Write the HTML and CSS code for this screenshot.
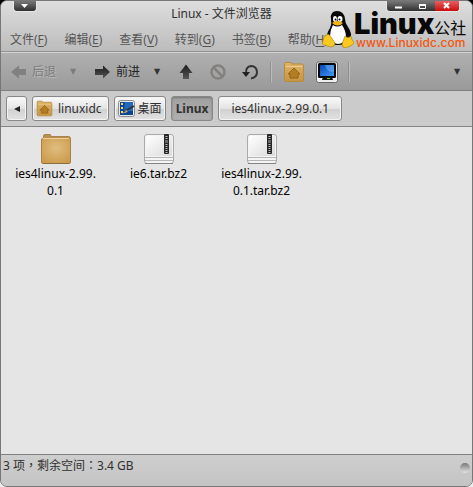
FILE: index.html
```html
<!DOCTYPE html>
<html lang="zh-CN">
<head>
<meta charset="utf-8">
<meta name="viewport" content="width=device-width, initial-scale=1">
<title>Linux - 文件浏览器</title>
<link rel="stylesheet" href="styles.css">
</head>
<body>
<svg class="defs" aria-hidden="true">
  <defs>
    <linearGradient id="dark" x1="0" y1="0" x2="0" y2="1"><stop offset="0" stop-color="#1c1c1c"/><stop offset="1" stop-color="#555"/></linearGradient>
    <linearGradient id="tan" x1="0" y1="0" x2="0" y2="1"><stop offset="0" stop-color="#dfb467"/><stop offset="1" stop-color="#c59443"/></linearGradient>
    <radialGradient id="folder" cx=".5" cy=".4" r=".7"><stop offset="0" stop-color="#dfbd80"/><stop offset="1" stop-color="#cc9a48"/></radialGradient>
    <linearGradient id="paper" x1="0" y1="0" x2="1" y2="1"><stop offset="0" stop-color="#fff"/><stop offset="1" stop-color="#dadada"/></linearGradient>
    <linearGradient id="screen" x1="0" y1="0" x2="1" y2="1"><stop offset="0" stop-color="#0b46b8"/><stop offset="1" stop-color="#3f9bf5"/></linearGradient>
    <symbol id="archive" viewBox="0 0 32 32">
      <rect x="1.500" y="1.500" width="29" height="29" rx="2.500" fill="#f4f4f4" stroke="#aaa"/>
      <rect x="3" y="3" width="26" height="20" rx="1" fill="url(#paper)"/>
      <path d="M2 24.500h28M2 27.500h28" stroke="#b5b5b5"/>
      <path d="M2 30.500h28" stroke="#858585"/>
      <rect x="21" y="1" width="5" height="20" rx="1" fill="#262626"/>
      <path d="M23.500 3v3M23.500 11v9" stroke="#bbb" stroke-width="2" stroke-dasharray="1 1"/>
      <rect x="22" y="7" width="3" height="3" fill="#666"/>
    </symbol>
    <symbol id="home" viewBox="0 0 22 22">
      <path d="M1.500 4V2.500q0-1 1-1h5q1 0 1 1V3H19q1.500 0 1.500 1.500V19q0 1.500-1.500 1.500H3Q1.500 20.500 1.500 19z" fill="url(#tan)" stroke="#b98a3f"/>
      <path d="M2.500 5.500h17" stroke="#edcc91"/>
      <path d="M11 7l6 6h-2v4H7v-4H5z" fill="#b37d23" stroke="#93651b"/>
    </symbol>
  </defs>
</svg>
<div class="window">
  <header class="chrome">
    <div class="titlebar">
      <button class="tab" aria-label="窗口菜单"><svg width="8" height="5" viewBox="0 0 8 5"><path d="M0 0h7L3.500 4z" fill="#fff"/></svg></button>
      <h1>Linux - 文件浏览器</h1>
      <div class="controls">
        <button aria-label="最小化"><svg width="8" height="8"><path d="M0 5.500h7" stroke="#fff" stroke-width="2"/></svg></button>
        <button aria-label="最大化"><svg width="8" height="8"><path d="M.5 3v3.500h6V3M0 3h7" fill="none" stroke="#fff"/><path d="M0 3h7" stroke="#fff" stroke-width="2"/></svg></button>
        <button class="close" aria-label="关闭"><svg width="8" height="8"><path d="M1 1l5 5M6 1L1 6" stroke="#fff" stroke-width="2"/></svg></button>
      </div>
    </div>
    <nav class="menu">
      <button>文件(<u>F</u>)</button>
      <button>编辑(<u>E</u>)</button>
      <button>查看(<u>V</u>)</button>
      <button>转到(<u>G</u>)</button>
      <button>书签(<u>B</u>)</button>
      <button>帮助(<u>H</u>)</button>
    </nav>
  </header>
  <div class="toolbar">
    <button class="back" disabled><svg width="16" height="14" viewBox="0 0 16 14"><path d="M0 7l8-6.500V4h7v6H8v3.500z" fill="#818181"/></svg><span>后退</span></button>
    <button class="drop back-drop" disabled aria-label="后退历史">▼</button>
    <button class="forward"><svg width="16" height="14" viewBox="0 0 16 14"><path d="M15 7L8 .5V4H0v6h8v3.500z" fill="url(#dark)"/></svg><span>前进</span></button>
    <button class="drop" aria-label="前进历史">▼</button>
    <button class="up" aria-label="向上"><svg width="16" height="16" viewBox="0 0 16 16"><path d="M8 .5L14.500 9H11v6H5V9H1.500z" fill="url(#dark)"/></svg></button>
    <button class="stop" disabled aria-label="停止"><svg width="16" height="16" viewBox="0 0 16 16"><circle cx="8" cy="8" r="6.500" fill="none" stroke="#858080" stroke-width="2.500"/><path d="M3.500 3.500l9 9" stroke="#858080" stroke-width="2.500"/></svg></button>
    <button class="reload" aria-label="重新载入"><svg width="16" height="16" viewBox="0 0 16 16"><path d="M9 14.500q6-1 6-6.500-.5-6-6-6Q4 2.500 4 8.500" fill="none" stroke="#333" stroke-width="2"/><path d="M0 8h8l-4 5z" fill="#222"/></svg></button>
    <i class="rule"></i>
    <button class="place" aria-label="主文件夹"><svg width="22" height="22"><use href="#home"/></svg></button>
    <button class="place" aria-label="计算机"><svg width="22" height="22" viewBox="0 0 22 22"><rect x=".5" y="1" width="21" height="20.500" rx="2" fill="#eee" stroke="#686868"/><rect x="2" y="2" width="18" height="15" rx="1.500" fill="#080808"/><rect x="4" y="4" width="14" height="11" fill="url(#screen)"/><path d="M9 4h9v7q-7 1-9-7z" fill="#6bb5fa" opacity=".5"/><path d="M7 16h9l1 3H6z" fill="#111"/><path d="M11 17.500h3" stroke="#7dc716"/></svg></button>
    <i class="rule last"></i>
    <button class="drop more" aria-label="更多">▼</button>
  </div>
  <nav class="path">
    <button class="prev" aria-label="向左"><svg width="6" height="6" viewBox="0 0 6 6"><path d="M0 3l6-3v6z" fill="#222"/></svg></button>
    <button class="crumb"><svg width="17" height="17"><use href="#home"/></svg>linuxidc</button>
    <button class="crumb desk"><svg width="17" height="17" viewBox="0 0 17 17"><rect x=".5" y=".5" width="16" height="16" rx="2" fill="#e8e8e8" stroke="#8d8d8d"/><rect x="2" y="2" width="13" height="13" fill="#0a4593"/><path d="M7 2h8v9H6z" fill="#2069bf"/><path d="M3 4h2M3 8h2M3 12h2" stroke="#ffda50" stroke-width="2"/><path d="M7 11l9-5" stroke="#333" stroke-width="2"/><path d="M3 13q4 0 5-3l2 1q-2 3-7 2z" fill="#c4a56d"/></svg>桌面</button>
    <button class="crumb current" aria-current="page">Linux</button>
    <button class="crumb long">ies4linux-2.99.0.1</button>
  </nav>
  <main class="files">
    <figure><svg width="32" height="32" viewBox="0 0 32 32"><path d="M3.500 5V3q0-1.500 1.500-1.500h5q1 0 1 2H28.500q2 0 2 2V29q0 1.500-1.500 1.500H3Q1.500 30.500 1.500 29V6z" fill="#bb8f49" stroke="#a68350"/><rect x="2" y="5" width="28" height="25" rx="2" fill="url(#folder)"/><path d="M3 5.500h26" stroke="#ebcf9e"/><path d="M3 30.500h26" stroke="#8c7040"/></svg><figcaption>ies4linux-2.99.<br>0.1</figcaption></figure>
    <figure><svg width="32" height="32"><use href="#archive"/></svg><figcaption>ie6.tar.bz2</figcaption></figure>
    <figure><svg width="32" height="32"><use href="#archive"/></svg><figcaption>ies4linux-2.99.<br>0.1.tar.bz2</figcaption></figure>
  </main>
  <footer class="status"><span>3 项<span class="punct" lang="zh-TW">，</span>剩余空间<span class="punct" lang="zh-TW">：</span>3.4 GB</span><i class="grip"></i></footer>
  <div class="brand">
    <svg class="tux" width="32" height="38" viewBox="0 0 32 38">
      <path d="M9 9Q8 1 15 1t8 8q0 4 3 8 5 7 2 13-4 5-12 5-8 0-11-6-1-5 3-11 2-4 1-9z" fill="#080808"/>
      <path d="M11 15q4 3 9 0 4 6 4 12-2 7-8 7-7-1-8-8 0-6 3-11z" fill="#fff"/>
      <ellipse cx="13" cy="9" rx="2" ry="3" fill="#fff"/><ellipse cx="18" cy="9" rx="2.500" ry="3" fill="#fff"/>
      <circle cx="13.500" cy="9.500" r="1"/><circle cx="17.500" cy="9.500" r="1"/>
      <path d="M10 13q5-4 11 0-5 5-11 0z" fill="#f5b60b"/>
      <path d="M4 25q3-2 5 2l4 6q0 4-4 4l-7-2q-3-1-1-4 0-4 3-6zM23 26q3 3 6 0l1 4q4 3 0 5l-6 3q-4 0-4-4z" fill="#f9c91d" stroke="#a57a12" stroke-width=".6"/>
    </svg>
    <div class="brand-text"><div class="name"><b>Linux</b><span>公社</span></div><a href="#">www.Linuxidc.com</a></div>
  </div>
</div>
</body>
</html>
```
FILE: styles.css
```css
* { box-sizing: border-box; }
body {
  margin: 0;
  background: linear-gradient(#000 50%, #eee 50%);
  font: 12px/17px "Noto Sans", "Noto Sans CJK SC", sans-serif;
  color: #303030;
}
button {
  display: flex;
  align-items: center;
  justify-content: center;
  margin: 0;
  padding: 0;
  border: 0;
  background: none;
  font: inherit;
  color: inherit;
  white-space: nowrap;
}
svg { display: block; flex: none; }
.defs { position: absolute; width: 0; height: 0; }
.window {
  position: relative;
  display: flex;
  flex-direction: column;
  min-height: 100vh;
  border: 1px solid #777;
  border-radius: 7px;
  background: #cbcbcb;
  overflow: hidden;
}
.chrome {
  background: linear-gradient(#dedede, #bcbcbc);
  border-bottom: 1px solid #929292;
}
.titlebar {
  display: flex;
  align-items: flex-start;
  justify-content: space-between;
  height: 25px;
  padding: 0 12px;
}
h1 { flex: 1; margin: 0; padding: 4px 0 0 20px; font-size: 12px; font-weight: 400; text-align: center; }
.tab, .controls {
  height: 11px;
  border: 1px solid #e6e6e6;
  border-top: 0;
  border-radius: 0 0 4px 4px;
  background: linear-gradient(#777, #303030);
  overflow: hidden;
}
.tab { width: 24px; }
.controls { display: flex; width: 74px; }
.controls button { flex: 1; }
.controls .close { background: linear-gradient(#e96060, #c90c0c); }
.menu { display: flex; gap: 17px; height: 25px; padding: 1px 9px 0; color: #555; }
u { text-underline-offset: 2px; }
.toolbar {
  display: flex;
  align-items: center;
  height: 39px;
  padding: 0 11px 0 10px;
  border-top: 1px solid #d4d4d4;
  border-bottom: 1px solid #808080;
  background: linear-gradient(#b0b0b0, #9a9a9a);
  color: #222;
}
.back, .forward { gap: 5px; }
.back { color: #7d7d7d; text-shadow: 1px 1px #bababa; }
.drop { width: 8px; margin-left: 13px; font: 8px/12px "DejaVu Sans", sans-serif; color: #333; }
.back-drop { color: #7d7d7d; }
.forward { margin-left: 18px; }
.up { margin-left: 17px; }
.stop, .reload { margin-left: 16px; }
.rule { width: 2px; height: 20px; margin-left: 12px; border-left: 1px solid #8e8e8e; border-right: 1px solid #bdbdbd; }
.place { margin-left: 11px; }
.rule.last { margin-left: 10px; }
.more { margin-left: auto; }
.path {
  display: flex;
  gap: 5px;
  height: 36px;
  padding: 5px;
  border-bottom: 1px solid #858585;
}
.path button {
  height: 25px;
  border: 1px solid #888;
  border-radius: 3px;
  background: linear-gradient(#fafafa, #e3e3e3 50%, #d0d0d0 51%, #e2e2e2);
  box-shadow: inset 0 0 0 1px #f3f3f3;
}
.path .prev { width: 21px; }
.path .crumb { gap: 5px; padding: 0 6px 0 3px; }
.path .desk { gap: 3px; padding: 0 3px; }
.path .current {
  padding: 0 4px;
  background: linear-gradient(#a1a1a1, #afafaf);
  box-shadow: inset 0 1px 2px #777;
  font-weight: 700;
}
.path .long { padding: 0 12px; }
.files {
  display: flex;
  flex: 1;
  align-items: flex-start;
  padding: 6px 3px;
  background: #e5e5e5;
  color: #000;
}
figure {
  display: flex;
  flex-direction: column;
  align-items: center;
  width: 103px;
  margin: 0;
  text-align: center;
}
.status {
  display: flex;
  justify-content: space-between;
  height: 32px;
  padding: 2px;
  border-top: 1px solid #828282;
  background: linear-gradient(#cecece, #c4c4c4);
}
.punct { font-family: "Noto Sans CJK TC", sans-serif; line-height: 1; }
.grip { width: 10px; height: 10px; margin-top: 6px; border-radius: 50%; background: linear-gradient(#777, #e5e5e5); }
.brand { position: absolute; top: 9px; right: 2px; display: flex; }
.brand-text { width: 116px; }
.name { display: flex; align-items: flex-end; height: 27px; color: #080808; }
.name b { font: 900 29px/26px Inter, sans-serif; }
.name span { font: 400 16px/20px "Noto Sans CJK SC", sans-serif; }
.brand a { display: block; padding-left: 2px; font: 500 12px/12px Inter, sans-serif; color: #f3560d; text-decoration: none; }
```
